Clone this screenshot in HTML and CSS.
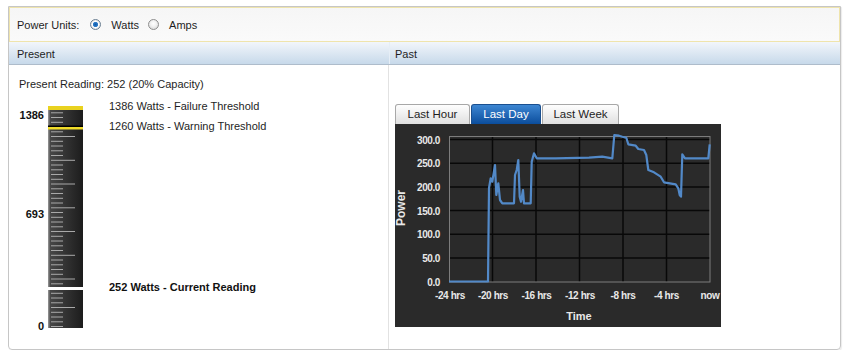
FILE: index.html
```html
<!DOCTYPE html>
<html>
<head>
<meta charset="utf-8">
<link rel="stylesheet" href="styles.css">
</head>
<body>
<div class="panel">
  <div class="units">
    <span class="units-label">Power Units:</span>
    <span class="radio"><span class="dot checked"></span>Watts</span>
    <span class="radio"><span class="dot"></span>Amps</span>
  </div>
  <div class="heads">
    <div class="head">Present</div>
    <div class="head head-past">Past</div>
  </div>
  <div class="cols">
    <div class="present">
      <div class="reading">Present Reading: 252 (20% Capacity)</div>
      <div class="gauge-row">
        <div class="scale">
          <div class="scale-top">1386</div>
          <div class="scale-mid">693</div>
          <div class="scale-low">0</div>
        </div>
        <svg class="gauge" width="37" height="224" viewBox="0 0 37 224">
          <defs>
            <linearGradient id="gbody" x1="0" x2="1" y1="0" y2="0">
              <stop offset="0" stop-color="#4a4a4a"/>
              <stop offset="0.5" stop-color="#333"/>
              <stop offset="1" stop-color="#1c1c1c"/>
            </linearGradient>
          </defs>
          <rect x="1" y="3" width="35" height="219" fill="url(#gbody)"/>
          <rect x="1" y="3" width="1.5" height="219" fill="#8a8a8a"/>
          <rect x="1" y="0" width="35" height="4" fill="#e9d21f"/>
          <g stroke="#a9a9a9" stroke-width="1">
            <line x1="4" x2="16" y1="220.5" y2="220.5"/>
            <line x1="4" x2="16" y1="215.8" y2="215.8"/>
            <line x1="4" x2="16" y1="211" y2="211"/>
            <line x1="4" x2="16" y1="206.3" y2="206.3"/>
            <line x1="4" x2="28" y1="201.5" y2="201.5"/>
            <line x1="4" x2="16" y1="196.8" y2="196.8"/>
            <line x1="4" x2="16" y1="192" y2="192"/>
            <line x1="4" x2="16" y1="187.3" y2="187.3"/>
            <line x1="4" x2="16" y1="177.8" y2="177.8"/>
            <line x1="4" x2="28" y1="173" y2="173"/>
            <line x1="4" x2="16" y1="168.3" y2="168.3"/>
            <line x1="4" x2="16" y1="163.5" y2="163.5"/>
            <line x1="4" x2="16" y1="158.8" y2="158.8"/>
            <line x1="4" x2="16" y1="154" y2="154"/>
            <line x1="4" x2="28" y1="149.3" y2="149.3"/>
            <line x1="4" x2="16" y1="144.5" y2="144.5"/>
            <line x1="4" x2="16" y1="139.8" y2="139.8"/>
            <line x1="4" x2="16" y1="135" y2="135"/>
            <line x1="4" x2="16" y1="130.3" y2="130.3"/>
            <line x1="4" x2="28" y1="125.5" y2="125.5"/>
            <line x1="4" x2="16" y1="120.8" y2="120.8"/>
            <line x1="4" x2="16" y1="116" y2="116"/>
            <line x1="4" x2="16" y1="111.3" y2="111.3"/>
            <line x1="4" x2="16" y1="106.5" y2="106.5"/>
            <line x1="4" x2="28" y1="101.8" y2="101.8"/>
            <line x1="4" x2="16" y1="97" y2="97"/>
            <line x1="4" x2="16" y1="92.3" y2="92.3"/>
            <line x1="4" x2="16" y1="87.5" y2="87.5"/>
            <line x1="4" x2="16" y1="82.8" y2="82.8"/>
            <line x1="4" x2="28" y1="78" y2="78"/>
            <line x1="4" x2="16" y1="73.3" y2="73.3"/>
            <line x1="4" x2="16" y1="68.5" y2="68.5"/>
            <line x1="4" x2="16" y1="63.8" y2="63.8"/>
            <line x1="4" x2="16" y1="59" y2="59"/>
            <line x1="4" x2="28" y1="54.3" y2="54.3"/>
            <line x1="4" x2="16" y1="49.5" y2="49.5"/>
            <line x1="4" x2="16" y1="44.8" y2="44.8"/>
            <line x1="4" x2="16" y1="40" y2="40"/>
            <line x1="4" x2="16" y1="35.3" y2="35.3"/>
            <line x1="4" x2="28" y1="30.5" y2="30.5"/>
            <line x1="4" x2="16" y1="25.8" y2="25.8"/>
            <line x1="4" x2="16" y1="16.3" y2="16.3"/>
            <line x1="4" x2="16" y1="11.5" y2="11.5"/>
            <line x1="4" x2="16" y1="6.8" y2="6.8"/>
          </g>
          <rect x="1" y="19.5" width="35" height="1.5" fill="#000"/>
          <rect x="1" y="21" width="35" height="2.5" fill="#f0dc2a"/>
          <rect x="0" y="181" width="37" height="3" fill="#fff"/>
        </svg>
        <div class="marks">
          <div class="mark">1386 Watts - Failure Threshold</div>
          <div class="mark mark-warn">1260 Watts - Warning Threshold</div>
          <div class="mark mark-cur">252 Watts - Current Reading</div>
        </div>
      </div>
    </div>
    <div class="past">
      <div class="tabs">
        <div class="tab tab-hour">Last Hour</div>
        <div class="tab tab-day active">Last Day</div>
        <div class="tab tab-week">Last Week</div>
      </div>
      <svg class="chart" width="326" height="203" viewBox="0 0 326 203">
        <rect x="0" y="0" width="326" height="203" fill="#2a2a2a"/>
        <g stroke="#080808" stroke-width="1.5">
          <line x1="97.5" x2="97.5" y1="12" y2="158"/>
          <line x1="141" x2="141" y1="12" y2="158"/>
          <line x1="184.5" x2="184.5" y1="12" y2="158"/>
          <line x1="228" x2="228" y1="12" y2="158"/>
          <line x1="271.5" x2="271.5" y1="12" y2="158"/>
          <line x1="54" x2="315" y1="15.5" y2="15.5"/>
          <line x1="54" x2="315" y1="39.2" y2="39.2"/>
          <line x1="54" x2="315" y1="62.9" y2="62.9"/>
          <line x1="54" x2="315" y1="86.6" y2="86.6"/>
          <line x1="54" x2="315" y1="110.3" y2="110.3"/>
          <line x1="54" x2="315" y1="134" y2="134"/>
        </g>
        <rect x="54.5" y="12.5" width="260.5" height="145.5" fill="none" stroke="#7c7c7c" stroke-width="1"/>
        <polyline fill="none" stroke="#5289c8" stroke-width="2.2" stroke-linejoin="round"
          points="54,157.5 93,157.5 94,64 95.7,54.3 97.3,57.7 100,41 101.3,71 103.3,59.3 105,76 107.3,79.3 119,79.3 120,51 121.7,46 123.3,36 124.7,72.7 126,77.7 128,66 129,79.3 135.7,79.3 136.7,37.7 139,29.3 141.7,34.3 160.7,34.3 194,33.7 207.3,32.7 217.3,34.3 219.3,11 224,11.7 227.3,12.7 231.3,13.7 233.3,20.3 240.7,21.7 243.3,25 249,26 251.3,31 253.3,46 259,48.3 265.7,52.7 269,58.3 280.7,60.3 283.3,64.3 284.7,71 286,72.7 287.3,30.3 290,34.3 313.3,34.3 314.7,20.3"/>
        <g class="axis" fill="#e8e8e8" text-anchor="end">
          <text x="45" y="19.5">300.0</text>
          <text x="45" y="43.2">250.0</text>
          <text x="45" y="66.9">200.0</text>
          <text x="45" y="90.6">150.0</text>
          <text x="45" y="114.3">100.0</text>
          <text x="45" y="138">50.0</text>
          <text x="45" y="161.7">0.0</text>
        </g>
        <g class="axis" fill="#e8e8e8" text-anchor="middle">
          <text x="55" y="175">-24 hrs</text>
          <text x="98" y="175">-20 hrs</text>
          <text x="141.5" y="175">-16 hrs</text>
          <text x="185" y="175">-12 hrs</text>
          <text x="228" y="175">-8 hrs</text>
          <text x="271.5" y="175">-4 hrs</text>
          <text x="315" y="175">now</text>
        </g>
        <text class="axis-title axis-time" x="184" y="196" fill="#e8e8e8" text-anchor="middle">Time</text>
        <text class="axis-title" transform="translate(10,84) rotate(-90)" fill="#e8e8e8" text-anchor="middle">Power</text>
      </svg>
    </div>
  </div>
</div>
</body>
</html>
```

FILE: styles.css
```css
* { box-sizing: border-box; }
html, body { background: #fff; }
body {
  margin: 6px 0 0 8px;
  font-family: "Liberation Sans", Arial, sans-serif;
  font-size: 11px;
  color: #1e1e1e;
}
.panel {
  width: 833px;
  height: 344px;
  border: 1px solid #c6c6c6;
  border-radius: 0 0 4px 4px;
  box-shadow: 1px 1px 1px rgba(0,0,0,0.08);
  display: flex;
  flex-direction: column;
}
.units {
  height: 35px;
  border: 1px solid #efe4ac;
  background: linear-gradient(#f6f6f6, #fafafa);
  display: flex;
  align-items: center;
  padding-left: 7px;
}
.units-label { margin-right: 11px; }
.radio {
  display: flex;
  align-items: center;
  margin-right: 9px;
}
.dot {
  width: 11px;
  height: 11px;
  border-radius: 50%;
  border: 1px solid #8e8e8e;
  background: radial-gradient(circle at 50% 40%, #fff 0, #f2f2f2 40%, #cfcfcf 100%);
  margin-right: 10px;
}
.dot.checked {
  border-color: #6b7f92;
  background: radial-gradient(circle, #0f5aa8 0, #2f7cc8 2.2px, #fff 3px, #eee 4px, #cfcfcf 100%);
}
.heads {
  height: 23px;
  display: grid;
  grid-template-columns: 380px 1fr;
  background: linear-gradient(#f2f6fb, #c7d9ea);
  border-bottom: 1px solid #aebccb;
}
.head {
  display: flex;
  align-items: center;
  padding-left: 8px;
  padding-top: 1px;
}
.head-past {
  border-left: 1px solid #e6eef6;
  padding-left: 5px;
}
.cols {
  flex: 1;
  display: grid;
  grid-template-columns: 380px 1fr;
}
.present {
  border-right: 1px solid #e2e2e2;
  padding: 13px 0 0 10px;
}
.reading { line-height: 13px; }
.gauge-row {
  display: flex;
  margin-top: 9px;
  margin-left: -10px;
}
.scale {
  width: 35px;
  text-align: right;
  font-weight: bold;
  line-height: 13px;
  color: #111;
}
.scale-top { margin-top: 9px; }
.scale-mid { margin-top: 86px; }
.scale-low { margin-top: 99px; }
.gauge {
  display: block;
  margin-left: 3px;
  margin-top: 6px;
}
.marks {
  margin-left: 25px;
  line-height: 13px;
}
.mark-warn { margin-top: 7px; }
.mark-cur { margin-top: 148px; font-weight: bold; color: #111; }
.past {
  padding: 39px 0 0 6px;
}
.tabs {
  display: flex;
  gap: 1px;
}
.tab {
  height: 20px;
  border: 1px solid #a8a8a8;
  border-bottom: none;
  border-radius: 3px 3px 0 0;
  background: linear-gradient(#fefefe, #e0e0e0);
  text-align: center;
  line-height: 18px;
  font-size: 11.5px;
  color: #1e1e1e;
}
.tab-hour { width: 75px; }
.tab-day { width: 70px; }
.tab-week { width: 77px; }
.tab.active {
  background: linear-gradient(#3d86d2, #0b4d9c);
  border-color: #1a4f8f;
  color: #fff;
}
.chart { display: block; }
.axis {
  font-family: "Liberation Sans", Arial, sans-serif;
  font-size: 10px;
  font-weight: bold;
  letter-spacing: -0.4px;
}
.axis-title {
  font-family: "Liberation Sans", Arial, sans-serif;
  font-size: 12px;
  font-weight: bold;
}
.axis-time { font-size: 11px; }
```
